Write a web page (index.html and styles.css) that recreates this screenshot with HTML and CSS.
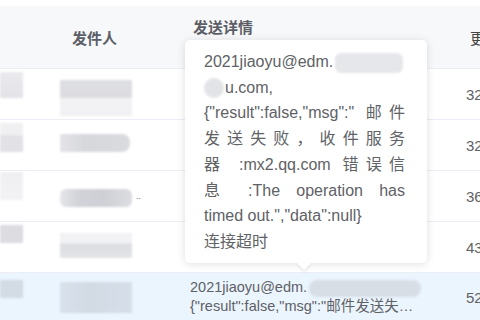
FILE: index.html
```html
<!DOCTYPE html>
<html lang="zh">
<head>
<meta charset="utf-8">
<link rel="stylesheet" href="styles.css">
</head>
<body>
<div class="page">
  <div class="top"></div>
  <div class="row head">
    <div class="c1"></div>
    <div class="c2 hcenter">发件人</div>
    <div class="c3 htop">发送详情</div>
    <div class="c4 hnum">更新时间</div>
  </div>
  <div class="row body">
    <div class="c1"><div class="blk r1a"></div></div>
    <div class="c2"><div class="blk r1b"></div></div>
    <div class="c3"></div>
    <div class="c4 num">3200</div>
  </div>
  <div class="row body">
    <div class="c1"><div class="blk r2a"></div></div>
    <div class="c2"><div class="blk r2b"></div></div>
    <div class="c3"></div>
    <div class="c4 num">3200</div>
  </div>
  <div class="row body">
    <div class="c1"><div class="blk r3a"></div></div>
    <div class="c2 inl"><div class="blk r3b"></div><span class="dots">..</span></div>
    <div class="c3"></div>
    <div class="c4 num">3600</div>
  </div>
  <div class="row body">
    <div class="c1"><div class="blk r4a"></div></div>
    <div class="c2"><div class="blk r4b"></div></div>
    <div class="c3"></div>
    <div class="c4 num">4300</div>
  </div>
  <div class="row body sel">
    <div class="c1"><div class="blk r5a"></div></div>
    <div class="c2"><div class="blk r5b"></div></div>
    <div class="c3 detail">
      <div class="dl">2021jiaoyu@edm.<span class="pill wide"></span></div>
      <div class="dl ell">{"result":false,"msg":"邮件发送失败，收件服务器</div>
    </div>
    <div class="c4 num">5200</div>
  </div>

  <div class="tip">
    <div class="ln">2021jiaoyu@edm.<span class="pill tp1"></span></div>
    <div class="ln"><span class="pill tp2"></span>u.com,</div>
    <div class="ln j">{"result":false,"msg":" 邮件</div>
    <div class="ln j">发送失败，收件服务</div>
    <div class="ln j">器 :mx2.qq.com 错误信</div>
    <div class="ln j">息 :The operation has</div>
    <div class="ln">timed out.","data":null}</div>
    <div class="ln">连接超时</div>
    <div class="arrow"></div>
  </div>
</div>
</body>
</html>
```

FILE: styles.css
```css
html, body {
  margin: 0;
  padding: 0;
  background: #ffffff;
}
.page {
  position: relative;
  width: 480px;
  height: 320px;
  overflow: hidden;
  font-family: "Liberation Sans", "Noto Sans CJK SC", sans-serif;
  color: #606266;
}
.top {
  height: 6px;
  background: #ffffff;
}
.row {
  display: flex;
  border-bottom: 1px solid #ebeef5;
}
.head {
  height: 62px;
  background: #f7f8fa;
  color: #5b5e66;
  font-weight: bold;
  font-size: 15px;
}
.body {
  height: 50px;
}
.sel {
  background: #ebf5fe;
  border-bottom: none;
  height: 48px;
}
.c1 {
  width: 40px;
  flex: none;
}
.c2 {
  width: 112px;
  flex: none;
  padding-left: 20px;
  box-sizing: border-box;
}
.c3 {
  width: 314px;
  flex: none;
  padding-left: 38px;
  box-sizing: border-box;
}
.c4 {
  flex: 1;
  white-space: nowrap;
  overflow: hidden;
  box-sizing: border-box;
}
.hcenter {
  display: flex;
  align-items: center;
  padding-left: 32px;
}
.htop {
  padding-top: 10px;
  padding-left: 41px;
}
.hnum {
  display: flex;
  align-items: center;
  padding-left: 4px;
  font-weight: normal;
  color: #444;
}
.num {
  display: flex;
  align-items: center;
  font-size: 15px;
  color: #606266;
  padding-left: 0;
}
.blk {
  filter: blur(0.8px);
}
.r1a { margin-top: 3px; width: 23px; height: 26px; background: linear-gradient(#eaeaee, #e3e3e8); }
.r1b { margin-top: 11px; width: 72px; height: 36px; background: linear-gradient(#dedfe3 0, #dcdce1 47%, #f3f3f5 53%, #f1f1f3 100%); }
.r2a { margin-top: 3px; width: 23px; height: 29px; background: linear-gradient(#f0f0f2 0, #f0f0f2 40%, #e1e1e6 45%, #e1e1e6 100%); }
.r2b { margin-top: 14px; width: 70px; height: 18px; border-radius: 0 8px 8px 0; background: linear-gradient(90deg, #e4e4e8 0, #d7d8dc 35%, #dadbdf 100%); }
.r3a { margin-top: 1px; width: 23px; height: 28px; background: linear-gradient(#efeff2 0, #f3f3f5 100%); }
.inl { display: flex; align-items: flex-start; }
.r3b { margin-top: 18px; width: 72px; height: 18px; border-radius: 6px; background: linear-gradient(90deg, #e6e6ea 0, #d2d3d8 25%, #cfd0d5 60%, #dcdde1 100%); }
.dots { margin-top: 20px; margin-left: 4px; font-size: 9px; color: #777; line-height: 10px; }
.r4a { margin-top: 3px; width: 23px; height: 18px; background: #dcdce1; }
.r4b { margin-top: 11px; width: 72px; height: 25px; background: linear-gradient(#f2f2f4 0, #f2f2f4 40%, #dcdde1 45%, #e3e4e8 100%); }
.r5a { margin-top: 7px; width: 23px; height: 18px; background: #d3dbe4; }
.r5b { margin-top: 9px; width: 72px; height: 31px; background: linear-gradient(90deg, #d9e2ec 0, #d2dae4 40%, #d6dfe9 100%); }
.detail {
  padding-left: 38px;
  padding-top: 5px;
  font-size: 14.5px;
  line-height: 19px;
  color: #5f6166;
}
.dl {
  white-space: nowrap;
}
.ell {
  width: 224px;
  overflow: hidden;
  text-overflow: ellipsis;
}
.pill {
  display: inline-block;
  vertical-align: middle;
  background: #e0e3e8;
  filter: blur(1px);
}
.wide {
  width: 112px;
  height: 17px;
  border-radius: 8px;
  margin-left: 2px;
  background: #d8dee6;
}
.tip {
  position: absolute;
  left: 185px;
  top: 40px;
  width: 242px;
  box-sizing: border-box;
  padding: 9px 22px 8px 19px;
  background: #ffffff;
  border-radius: 5px;
  box-shadow: 0 1px 8px rgba(0, 0, 0, 0.13);
  font-size: 16px;
  line-height: 25.7px;
  color: #606266;
}
.ln {
  white-space: nowrap;
}
.ln.j {
  text-align: justify;
  text-align-last: justify;
  white-space: normal;
}
.tp1 {
  width: 68px;
  height: 20px;
  border-radius: 6px;
  margin-left: 2px;
  background: #e6e7ea;
}
.tp2 {
  width: 20px;
  height: 20px;
  border-radius: 10px;
  margin-right: 1px;
  background: #e3e4e7;
}
.arrow {
  position: absolute;
  left: 114px;
  bottom: -5px;
  width: 10px;
  height: 10px;
  background: #ffffff;
  transform: rotate(45deg);
  box-shadow: 2px 2px 3px rgba(0, 0, 0, 0.06);
}
```
